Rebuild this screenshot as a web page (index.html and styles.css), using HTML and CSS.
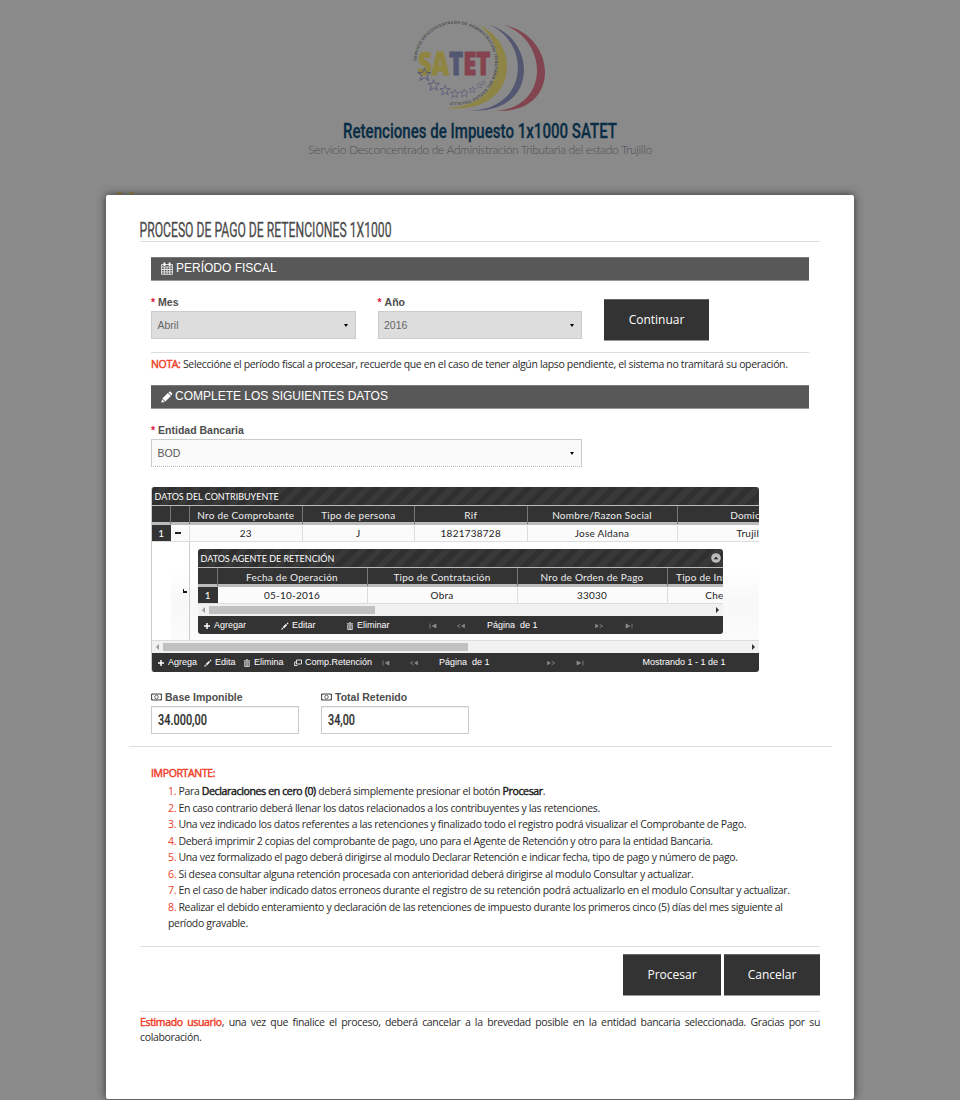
FILE: index.html
```html
<!DOCTYPE html>
<html lang="es">
<head>
<meta charset="utf-8">
<title>Retenciones de Impuesto 1x1000 SATET</title>
<link rel="stylesheet" href="styles.css">
</head>
<body>
<svg width="0" height="0" class="defs">
  <symbol id="star" viewBox="-10 -10 20 20"><path d="M0-9 2.4-3H9L3.7 1.2 5.8 8 0 4-5.8 8-3.7 1.2-9-3H-2.4Z" fill="none" stroke="#55577a" stroke-width="1.3"/></symbol>
  <symbol id="plus" viewBox="0 0 8 8"><path d="M4 1v6M1 4h6" stroke="#fff" stroke-width="1.5"/></symbol>
  <symbol id="pencil" viewBox="0 0 8 8"><path d="M.3 7.7 1 5.5 2.5 7ZM1.7 4.9 4.9 1.9 6.1 3.1 3.1 6.3ZM5.6 1.2 6.4.5 7.6 1.7 6.8 2.4Z" fill="#fff"/></symbol>
  <symbol id="trash" viewBox="0 0 8 8"><path d="M.8 1.8h6.4M3 .8h2M1.7 3v4.5h4.6V3ZM3.2 3.5v3.5M4.8 3.5v3.5" fill="none" stroke="#ddd" stroke-width=".9"/></symbol>
  <symbol id="copy" viewBox="0 0 8 8"><path d="M2.5 1h5v4h-5ZM2.5 3H.7v4M.7 6.5h2.8" fill="none" stroke="#eee" stroke-width=".9"/></symbol>
  <symbol id="first" viewBox="0 0 8 8"><path d="M1 1.5v5M7 2v4L3.3 4Z" fill="#888" stroke="#888" stroke-width=".8"/></symbol>
  <symbol id="prev" viewBox="0 0 8 8"><path d="M3.4 2.2.4 4l3 1.8" fill="none" stroke="#888" stroke-width=".8"/><path d="M7.8 1.8v4.4L4 4Z" fill="#888"/></symbol>
  <symbol id="money" viewBox="0 0 11 8"><path d="M.6 1h9.8v6H.6Z" fill="none" stroke="#444" stroke-width="1"/><ellipse cx="5.5" cy="4" rx="1.7" ry="2" fill="none" stroke="#444" stroke-width=".8"/><path d="M0 3l2-2H0ZM11 3 9 1h2ZM0 5l2 2H0ZM11 5 9 7h2Z" fill="#444"/></symbol>
</svg>

<header class="brand">
  <svg class="logo" viewBox="0 0 480 315">
    <path d="M232 38C364 85 364 310 135 288C325 285 325 90 232 38Z" fill="#8e8446"/>
    <path d="M270 40C410 80 420 306 210 296C390 290 390 90 270 40Z" fill="#545772"/>
    <path d="M315 40C475 75 483 306 290 296C447 285 447 90 315 40Z" fill="#82454f"/>
    <path id="ring" d="M49 147A118 118 0 1 1 135 267" fill="none"/>
    <text class="ring-text"><textPath href="#ring" textLength="566">SERVICIO DESCONCENTRADO DE ADMINISTRACIÓN TRIBUTARIA DEL ESTADO TRUJILLO</textPath></text>
    <text class="mark" x="54" y="189" textLength="217" lengthAdjust="spacingAndGlyphs"><tspan class="y">SA</tspan><tspan class="b">T</tspan><tspan class="r">ET</tspan></text>
    <use href="#star" x="51" y="166" width="44" height="44"/>
    <use href="#star" x="82" y="201" width="38" height="38"/>
    <use href="#star" x="118" y="218" width="34" height="34"/>
    <use href="#star" x="150" y="231" width="29" height="29"/>
    <use href="#star" x="179" y="230" width="28" height="28"/>
    <use href="#star" x="206" y="222" width="23" height="23"/>
    <use href="#star" x="229" y="211" width="19" height="19"/>
    <use href="#star" x="243" y="205" width="15" height="15"/>
  </svg>
  <h1 class="brand-title"><svg width="276" height="24"><text x="1" y="19" textLength="274" lengthAdjust="spacingAndGlyphs">Retenciones de Impuesto 1x1000 SATET</text></svg></h1>
  <p class="brand-sub">Servicio Desconcentrado de Administración Tributaria del estado Trujillo</p>
  <div class="peek"><i></i><i></i></div>
</header>

<main class="modal">
  <h2 class="title"><svg width="256" height="24"><text x="-.5" y="20" textLength="252" lengthAdjust="spacingAndGlyphs">PROCESO DE PAGO DE RETENCIONES 1X1000</text></svg></h2>
  <div class="inner">
    <h3 class="bar"><svg width="12" height="13" viewBox="0 0 12 13"><path d="M.6 2.5h10.8v9.8H.6ZM.6 5h10.8M.6 7.5h10.8M.6 9.9h10.8M3.3 5v7M6 5v7M8.7 5v7" fill="none" stroke="#fff" stroke-width=".8"/><path d="M2.5.5h1.8V4H2.5ZM7.7.5h1.8V4H7.7Z" fill="#fff"/></svg><span>PERÍODO FISCAL</span></h3>
    <div class="period">
      <div class="field w204"><label><b>*</b> Mes</label><div class="select off">Abril<i></i></div></div>
      <div class="field w204"><label><b>*</b> Año</label><div class="select off">2016<i></i></div></div>
      <button class="btn go">Continuar</button>
    </div>
    <p class="note"><strong>NOTA:</strong> <span>Seleccióne el período fiscal a procesar, recuerde que en el caso de tener algún lapso pendiente, el sistema no tramitará su operación.</span></p>
    <h3 class="bar"><svg width="11" height="12" viewBox="0 0 11 12"><path d="M.3 11.5 1 8.2 3.8 11ZM1.4 7.6 6.9 2.1 9.9 5.1 4.4 10.6ZM7.5 1.5 8.6.6Q9 .2 9.5.7L11 2.2Q11.5 2.7 11 3.2L10.4 4.4Z" fill="#fff"/></svg><span>COMPLETE LOS SIGUIENTES DATOS</span></h3>
    <div class="bank"><div class="field w431"><label><b>*</b> Entidad Bancaria</label><div class="select dotted">BOD<i></i></div></div></div>

    <section class="grid">
      <div class="cap"><span>DATOS DEL CONTRIBUYENTE</span></div>
      <div class="row head outer"><span></span><span></span><span>Nro de Comprobante</span><span>Tipo de persona</span><span>Rif</span><span>Nombre/Razon Social</span><span>Domicilio</span></div>
      <div class="row data outer"><span class="num">1</span><span class="minus"><i></i></span><span>23</span><span>J</span><span>1821738728</span><span>Jose Aldana</span><span>Trujillo</span></div>
      <div class="nest">
        <div class="gut"></div><div class="gut elbow"><i></i></div>
        <section class="grid sub">
          <div class="cap"><span>DATOS AGENTE DE RETENCIÓN</span><svg width="10" height="10" viewBox="0 0 10 10"><circle cx="5" cy="5" r="4.8" fill="#bbb"/><path d="M2.6 6.3 5 3.7 7.4 6.3Z" fill="#222"/></svg></div>
          <div class="row head innr"><span></span><span>Fecha de Operación</span><span>Tipo de Contratación</span><span>Nro de Orden de Pago</span><span>Tipo de Instrumento</span></div>
          <div class="row data innr"><span class="num">1</span><span>05-10-2016</span><span>Obra</span><span>33030</span><span>Cheque</span></div>
          <div class="scroll"><i class="l"></i><b class="thumb-in"></b><i class="r"></i></div>
          <div class="pager in">
            <span><svg><use href="#plus"/></svg>Agregar</span><span><svg><use href="#pencil"/></svg>Editar</span><span><svg><use href="#trash"/></svg>Eliminar</span>
            <span><svg><use href="#first"/></svg></span><span><svg><use href="#prev"/></svg></span><span class="pre">Página  de 1</span><span><svg class="flip"><use href="#prev"/></svg></span><span><svg class="flip"><use href="#first"/></svg></span>
          </div>
        </section>
      </div>
      <div class="scroll"><i class="l"></i><b class="thumb-out"></b><i class="r"></i></div>
      <div class="pager out">
        <span><svg><use href="#plus"/></svg>Agrega</span><span><svg><use href="#pencil"/></svg>Edita</span><span><svg><use href="#trash"/></svg>Elimina</span><span><svg><use href="#copy"/></svg>Comp.Retención</span>
        <span><svg><use href="#first"/></svg></span><span><svg><use href="#prev"/></svg></span><span class="pre">Página  de 1</span><span><svg class="flip"><use href="#prev"/></svg></span><span><svg class="flip"><use href="#first"/></svg></span><span>Mostrando 1 - 1 de 1</span>
      </div>
    </section>

    <div class="totals">
      <div class="field w148"><label><svg width="11" height="8"><use href="#money"/></svg> Base Imponible</label><div class="input"><svg width="60" height="20"><text x="0" y="15" textLength="49" lengthAdjust="spacingAndGlyphs">34.000,00</text></svg></div></div>
      <div class="field w148"><label><svg width="11" height="8"><use href="#money"/></svg> Total Retenido</label><div class="input"><svg width="60" height="20"><text x="0" y="15" textLength="27" lengthAdjust="spacingAndGlyphs">34,00</text></svg></div></div>
    </div>
  </div>
  <div class="wide"></div>
  <div class="important">
    <strong>IMPORTANTE:</strong>
    <ol>
      <li>Para <b>Declaraciones en cero (0)</b> deberá simplemente presionar el botón <b>Procesar</b>.</li>
      <li>En caso contrario deberá llenar los datos relacionados a los contribuyentes y las retenciones.</li>
      <li>Una vez indicado los datos referentes a las retenciones y finalizado todo el registro podrá visualizar el Comprobante de Pago.</li>
      <li>Deberá imprimir 2 copias del comprobante de pago, uno para el Agente de Retención y otro para la entidad Bancaria.</li>
      <li>Una vez formalizado el pago deberá dirigirse al modulo Declarar Retención e indicar fecha, tipo de pago y número de pago.</li>
      <li>Si desea consultar alguna retención procesada con anterioridad deberá dirigirse al modulo Consultar y actualizar.</li>
      <li>En el caso de haber indicado datos erroneos durante el registro de su retención podrá actualizarlo en el modulo Consultar y actualizar.</li>
      <li>Realizar el debido enteramiento y declaración de las retenciones de impuesto durante los primeros cinco (5) días del mes siguiente al<br>período gravable.</li>
    </ol>
  </div>
  <div class="actions"><button class="btn p">Procesar</button><button class="btn c">Cancelar</button></div>
  <p class="bye"><strong>Estimado usuario</strong>, una vez que finalice el proceso, deberá cancelar a la brevedad posible en la entidad bancaria seleccionada. Gracias por su colaboración.</p>
</main>
</body>
</html>
```
FILE: styles.css
```css
* { box-sizing: border-box; }
html { height: 1100px; overflow: hidden; background: #8a8a8a; }
body { margin: 0; height: 1100px; overflow: hidden; font: 10.5px/16px "Open Sans", sans-serif; letter-spacing: -.345px; color: #2b2b2b; }
h1, h2, h3, p, ol { margin: 0; padding: 0; font-weight: normal; }
svg { display: block; overflow: visible; flex: none; }
.defs { position: absolute; }

.brand { height: 195px; padding-top: 12px; display: flex; flex-direction: column; align-items: center; letter-spacing: 0; }
.logo { width: 160px; height: 105px; }
.ring-text { font: bold 12px "Liberation Sans", sans-serif; fill: #4b4b4b; }
.mark { font: 800 94px "Open Sans", sans-serif; stroke-width: 3px; }
.mark .y { fill: #8f8540; stroke: #8f8540; }
.mark .b { fill: #545772; stroke: #545772; }
.mark .r { fill: #84434e; stroke: #84434e; }
.brand-title { height: 25px; margin-top: 2px; }
.brand-title text { font: 500 21px Roboto, sans-serif; fill: #092d45; stroke: #092d45; stroke-width: .3px; }
.brand-sub { font: 300 12px/14px Lato, sans-serif; letter-spacing: -.35px; color: #505050; height: 14px; margin-top: -1px; white-space: nowrap; }
.peek { width: 726px; margin-top: 35px; display: flex; gap: 7px; }
.peek i { width: 5px; height: 2px; background: #77683c; }

.modal { width: 748px; height: 904px; margin: 0 auto; padding: 0 34px; background: #fff; box-shadow: 0 0 8px #333; border-radius: 2px; }
.title { height: 47px; padding-top: 22px; border-bottom: 1px solid #ddd; letter-spacing: 0; }
.title text { font: 400 19.5px Roboto, sans-serif; fill: #4a4a4a; stroke: #4a4a4a; stroke-width: .3px; }
.inner { padding: 15px 11px 0; }
.bar { height: 23.5px; background: #585858; border-top: 1px solid #777; border-bottom: 1px solid #999; padding: 0 10px; display: flex; align-items: center; gap: 3px; color: #fff; font: 12px/21px "Liberation Sans", sans-serif; letter-spacing: 0; }
.field { letter-spacing: 0; }
.field label { display: flex; align-items: center; gap: 3px; height: 15px; font: bold 10.5px/15px "Liberation Sans", sans-serif; color: #4d4d4d; margin-bottom: 2px; padding-top: 1px; white-space: nowrap; }
.field label b { color: #e2143c; }
.w204 { width: 204.5px; }
.w431 { width: 431px; }
.w148 { width: 148px; }
.select { height: 28px; border: 1px solid #ccc; background: #fafafa; padding: 0 7px 0 5.5px; display: flex; align-items: center; justify-content: space-between; font: 10.5px "Liberation Sans", sans-serif; color: #555; }
.select.off { background: #ddd; color: #666; }
.select.dotted { border-bottom: 1px dotted #bbb; }
.select i { border: 2.5px solid transparent; border-top: 3px solid #000; border-bottom: 0; }
.period { display: flex; height: 72px; padding-top: 13.5px; gap: 22px; border-bottom: 1px solid #ddd; }
.btn { border: 0; border-bottom: 1px solid #999; border-top: 1px solid #666; background: #333; color: #fff; font: 12px "Open Sans", sans-serif; height: 42px; padding: 0 0 1px; }
.go { width: 105px; margin-top: 5px; }
.note { height: 32.5px; padding-top: 3px; white-space: nowrap; }
strong, .important b { font-weight: 400; -webkit-text-stroke: .45px currentColor; }
strong { color: #f0412a; }
.bank { height: 78.5px; padding-top: 13.5px; }

.grid { width: 608px; height: 185px; border-radius: 3px; overflow: hidden; background: #fbfbfb; font: 10px/16px Lato, sans-serif; letter-spacing: .24px; border-left: 1px solid #ccc; }
.cap { height: 18px; padding: 0 2px 0 2.5px; display: flex; align-items: center; justify-content: space-between; color: #fff; font-size: 9px; letter-spacing: 0; background: repeating-linear-gradient(135deg, #303030 0 6px, #393939 6px 12px); }
.cap span { padding-top: 1px; }
.row { display: grid; text-align: center; }
.row span { overflow: visible; white-space: nowrap; }
.outer { grid-template-columns: 18.5px 19.5px 112.5px 112.5px 112.5px 150px 150px; }
.innr { grid-template-columns: 19.5px 150px 150px 150px 112px; }
.head { height: 20px; line-height: 18px; border-top: 1px solid #bbb; border-bottom: 3px solid #bbb; background: #333; color: #eee; }
.head span { border-right: 1px solid #777; }
.data { height: 17px; border-bottom: 1px solid #ddd; color: #222; }
.data span { border-right: 1px solid #ddd; }
.data .num { background: #333; color: #fff; border: 0; }
.data .minus { display: flex; align-items: center; padding-left: 4px; }
.minus i { width: 6px; height: 2px; background: #222; }
.nest { height: 99px; display: flex; border-bottom: 1px solid #ddd; background: linear-gradient(#fff, #fff 30%, #f8f8f8 60%, #fbfbfb); }
.gut { width: 18.5px; background: #fff; }
.elbow { width: 19.5px; border-right: 1px solid #ccc; background: none; padding: 47px 0 0 12px; }
.elbow i { display: block; width: 4px; height: 4px; border-left: 1.5px solid #111; border-bottom: 2px solid #111; }
.sub { width: 525px; height: 85px; margin: 7px 0 0 8px; border: 0; }
.scroll { height: 12px; background: #f1f1f1; display: flex; align-items: center; }
.scroll i { width: 11px; height: 6px; display: flex; justify-content: center; }
.scroll i::after { content: ""; border: 3px solid transparent; }
.scroll .l::after { border-right: 3px solid #999; border-left: 0; }
.scroll .r { margin-left: auto; }
.scroll .r::after { border-left: 3px solid #333; border-right: 0; }
.scroll b { height: 8px; background: #c1c1c1; }
.thumb-in { width: 166px; }
.thumb-out { width: 305px; }
.pager { height: 19px; background: #333; color: #fff; font: 9px/18px "Liberation Sans", sans-serif; letter-spacing: 0; display: grid; }
.pager span { display: flex; align-items: center; gap: 3px; height: 18px; white-space: nowrap; }
.pager .pre { white-space: pre; }
.pager svg { width: 8px; height: 8px; margin-top: 1px; }
.pager svg.flip { transform: scaleX(-1); }
.in { grid-template-columns: 78px 65px 83px 28px 30px 108px 30px 40px; padding-left: 5px; }
.out { grid-template-columns: 47px 39px 51px 88px 28px 29px 108px 29px 66.5px 90px; padding-left: 5px; }

.totals { display: flex; gap: 22px; height: 74px; padding-top: 17px; }
.input { height: 28px; border: 1px solid #ccc; box-shadow: inset 0 1px 1px #eee; padding: 3px 6px; }
.input text { font: 500 15px Roboto, sans-serif; fill: #333; stroke: #333; stroke-width: .2px; }
.wide { margin: 0 -11.5px; height: 1px; background: #ddd; }
.important { height: 200px; padding: 18px 11px 0; border-bottom: 1px solid #ddd; line-height: 16.5px; }
.important strong { display: block; height: 18px; }
.important ol { list-style: none; counter-reset: n; padding-left: 17px; white-space: nowrap; }
.important li { counter-increment: n; }
.important li::before { content: counter(n) ". "; color: #f0412a; }
.important b { color: #222; }
.actions { height: 65px; padding-top: 7px; display: flex; justify-content: flex-end; gap: 3px; border-bottom: 1px solid #e4e4e4; }
.p { width: 98px; }
.c { width: 96px; }
.bye { text-align: justify; padding-top: 3px; line-height: 14.5px; }
```
